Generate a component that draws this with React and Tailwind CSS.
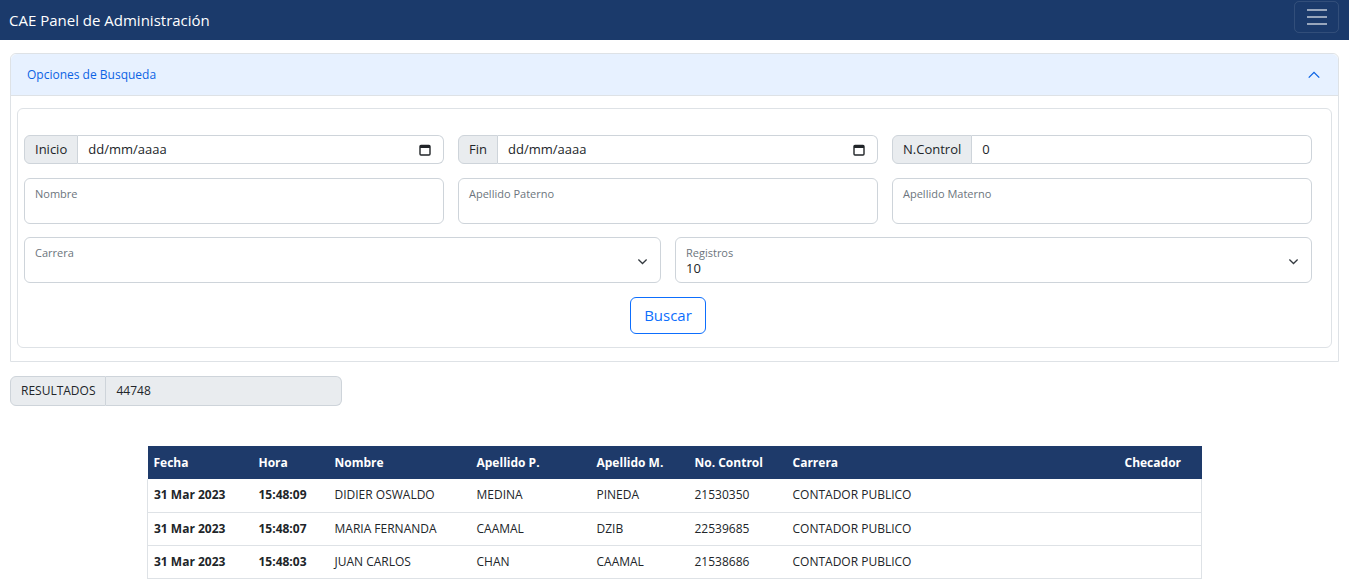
import React from 'react';

const rows = [
  { fecha: '31 Mar 2023', hora: '15:48:09', nombre: 'DIDIER OSWALDO', ap: 'MEDINA', am: 'PINEDA', nc: '21530350', carrera: 'CONTADOR PUBLICO' },
  { fecha: '31 Mar 2023', hora: '15:48:07', nombre: 'MARIA FERNANDA', ap: 'CAAMAL', am: 'DZIB', nc: '22539685', carrera: 'CONTADOR PUBLICO' },
  { fecha: '31 Mar 2023', hora: '15:48:03', nombre: 'JUAN CARLOS', ap: 'CHAN', am: 'CAAMAL', nc: '21538686', carrera: 'CONTADOR PUBLICO' },
];

function CalendarIcon() {
  return (
    <svg width="12" height="12" viewBox="0 0 12 12" className="text-[#212529]">
      <rect x="1" y="1.5" width="10" height="9.5" rx="1" fill="none" stroke="currentColor" strokeWidth="1.4" />
      <rect x="1" y="1.5" width="10" height="2.5" fill="currentColor" />
    </svg>
  );
}

function Chevron({ up = false, size = 14, width = 1.6, className = '' }) {
  return (
    <svg width={size} height={size} viewBox="0 0 16 16" className={className}>
      <path d={up ? 'M2 11 L8 5 L14 11' : 'M2 5 L8 11 L14 5'} fill="none" stroke="currentColor" strokeWidth={width} />
    </svg>
  );
}

function DateGroup({ label }) {
  return (
    <div className="flex h-[29px] text-[13px]">
      <span className="flex items-center px-[10px] bg-[#e9ecef] border border-[#ced4da] rounded-l-[6px] text-[#212529]">{label}</span>
      <div className="flex-1 flex items-center justify-between pl-[10px] pr-[12px] border border-l-0 border-[#ced4da] rounded-r-[6px] bg-white text-[#212529]">
        <span>dd/mm/aaaa</span>
        <CalendarIcon />
      </div>
    </div>
  );
}

function Floating({ label, value, select = false }) {
  return (
    <div className="relative h-[46px] border border-[#ced4da] rounded-[6px] bg-white px-[10px] pt-[8px]">
      <div className="text-[11px] leading-[14px] text-[#6c757d]">{label}</div>
      {value && <div className="text-[13px] leading-[16px] text-[#212529]">{value}</div>}
      {select && <Chevron size={11} width={1.8} className="absolute right-[12px] top-[18px] text-[#343a40]" />}
    </div>
  );
}

export default function App() {
  return (
    <div className="min-h-[579px] bg-white text-[#212529]" style={{ fontFamily: '"Open Sans", "Noto Sans", sans-serif' }}>
      <nav className="h-[40px] bg-[#1b3a6b] flex items-center justify-between pl-[9px] pr-[10px]">
        <span className="text-white text-[15px]">CAE Panel de Administración</span>
        <button className="w-[45px] h-[32px] -mt-[6px] border border-white/10 rounded-[5px] flex flex-col items-center justify-center gap-[5px]">
          <span className="block w-[20px] h-[2px] bg-white/55"></span>
          <span className="block w-[20px] h-[2px] bg-white/55"></span>
          <span className="block w-[20px] h-[2px] bg-white/55"></span>
        </button>
      </nav>

      <div className="mx-[10px] mt-[13px] border border-[#dee2e6] rounded-t-[6px]">
        <div className="h-[42px] bg-[#e7f1ff] border-b border-[#dee2e6] rounded-t-[6px] flex items-center justify-between pl-[16px] pr-[17px]">
          <span className="text-[12px] text-[#0c63e4] mt-[1px]">Opciones de Busqueda</span>
          <Chevron up className="text-[#0c63e4]" />
        </div>
        <div className="pt-[12px] px-[6px] pb-[13px]">
          <div className="border border-[#dee2e6] rounded-[6px] pt-[26px] pl-[6px] pr-[19px] pb-[13px]">
            <div className="grid grid-cols-3 gap-[14px]">
              <DateGroup label="Inicio" />
              <DateGroup label="Fin" />
              <div className="flex h-[29px] text-[13px]">
                <span className="flex items-center px-[10px] bg-[#e9ecef] border border-[#ced4da] rounded-l-[6px]">N.Control</span>
                <div className="flex-1 flex items-center pl-[10px] border border-l-0 border-[#ced4da] rounded-r-[6px]">0</div>
              </div>
            </div>
            <div className="grid grid-cols-3 gap-[14px] mt-[14px]">
              <Floating label="Nombre" />
              <Floating label="Apellido Paterno" />
              <Floating label="Apellido Materno" />
            </div>
            <div className="grid grid-cols-2 gap-[14px] mt-[13px]">
              <Floating label="Carrera" select />
              <Floating label="Registros" value="10" select />
            </div>
            <div className="flex justify-center mt-[14px]">
              <button className="h-[37px] px-[13px] border border-[#0d6efd] rounded-[6px] text-[#0d6efd] text-[15px]">Buscar</button>
            </div>
          </div>
        </div>
      </div>

      <div className="ml-[10px] mt-[14px] w-[332px] h-[30px] flex text-[12px]">
        <span className="flex items-center px-[10px] bg-[#e9ecef] border border-[#ced4da] rounded-l-[6px]">RESULTADOS</span>
        <span className="flex-1 flex items-center pl-[10px] bg-[#e9ecef] border border-l-0 border-[#ced4da] rounded-r-[6px]">44748</span>
      </div>

      <table className="w-[1054px] mx-auto mt-[40px] border-collapse text-[12px] table-fixed">
        <colgroup>
          <col className="w-[105px]" />
          <col className="w-[76px]" />
          <col className="w-[142px]" />
          <col className="w-[120px]" />
          <col className="w-[98px]" />
          <col className="w-[98px]" />
          <col className="w-[332px]" />
          <col className="w-[83px]" />
        </colgroup>
        <thead>
          <tr className="h-[33px] bg-[#1e3a6a] text-white font-bold text-left">
            {['Fecha', 'Hora', 'Nombre', 'Apellido P.', 'Apellido M.', 'No. Control', 'Carrera', 'Checador'].map((h) => (
              <th key={h} className="px-[6px] font-bold">{h}</th>
            ))}
          </tr>
        </thead>
        <tbody className="border-x border-[#dee2e6]">
          {rows.map((r, i) => (
            <tr key={i} className="h-[33px] border-b border-[#dee2e6]">
              <td className="px-[6px] font-bold">{r.fecha}</td>
              <td className="px-[6px] font-bold">{r.hora}</td>
              <td className="px-[6px]">{r.nombre}</td>
              <td className="px-[6px]">{r.ap}</td>
              <td className="px-[6px]">{r.am}</td>
              <td className="px-[6px]">{r.nc}</td>
              <td className="px-[6px]">{r.carrera}</td>
              <td className="px-[6px]"></td>
            </tr>
          ))}
        </tbody>
      </table>
    </div>
  );
}
